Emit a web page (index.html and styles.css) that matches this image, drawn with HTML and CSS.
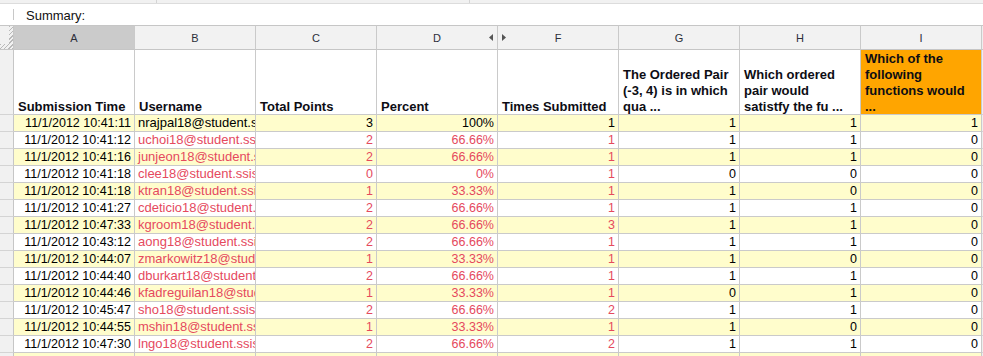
FILE: index.html
```html
<!DOCTYPE html>
<html>
<head>
<meta charset="utf-8">
<link rel="stylesheet" href="styles.css">
</head>
<body>
<div class="topstrip"><div class="seg s1"></div><div class="seg s2"></div><div class="seg s3"></div></div>
<div class="summary"><span class="bar"></span><span class="summary-text">Summary:</span></div>
<div class="sheet">
  <div class="row letters">
    <div class="rn corner"></div>
    <div class="c lt sel">A</div>
    <div class="c lt">B</div>
    <div class="c lt">C</div>
    <div class="c lt">D<svg class="arr arr-l" width="4" height="7" viewBox="0 0 4 7"><path d="M4 0 L0 3.5 L4 7 Z" fill="#555"/></svg></div>
    <div class="c lt">F<svg class="arr arr-r" width="4" height="7" viewBox="0 0 4 7"><path d="M0 0 L4 3.5 L0 7 Z" fill="#555"/></svg></div>
    <div class="c lt">G</div>
    <div class="c lt">H</div>
    <div class="c lt">I</div>
    <div class="fill"></div>
  </div>
  <div class="row head">
    <div class="rn"></div>
    <div class="c h"><span class="ht">Submission Time</span></div>
    <div class="c h"><span class="ht">Username</span></div>
    <div class="c h"><span class="ht">Total Points</span></div>
    <div class="c h"><span class="ht">Percent</span></div>
    <div class="c h"><span class="ht">Times Submitted</span></div>
    <div class="c h"><span class="ht">The Ordered Pair<br>(-3, 4) is in which<br>qua ...</span></div>
    <div class="c h"><span class="ht">Which ordered<br>pair would<br>satistfy the fu ...</span></div>
    <div class="c h orange"><span class="ht">Which of the<br>following<br>functions would<br>...</span></div>
    <div class="fill"></div>
  </div>

  <div class="row y">
    <div class="rn"></div><div class="c r">11/1/2012 10:41:11</div><div class="c l">nrajpal18@student.ssis.edu.vn</div><div class="c r">3</div><div class="c r">100%</div><div class="c r">1</div><div class="c r">1</div><div class="c r">1</div><div class="c r">1</div><div class="fill"></div>
  </div>
  <div class="row">
    <div class="rn"></div><div class="c r">11/1/2012 10:41:12</div><div class="c l red">uchoi18@student.ssis.edu.vn</div><div class="c r red">2</div><div class="c r red">66.66%</div><div class="c r red">1</div><div class="c r">1</div><div class="c r">1</div><div class="c r">0</div><div class="fill"></div>
  </div>
  <div class="row y">
    <div class="rn"></div><div class="c r">11/1/2012 10:41:16</div><div class="c l red">junjeon18@student.ssis.edu.vn</div><div class="c r red">2</div><div class="c r red">66.66%</div><div class="c r red">1</div><div class="c r">1</div><div class="c r">1</div><div class="c r">0</div><div class="fill"></div>
  </div>
  <div class="row">
    <div class="rn"></div><div class="c r">11/1/2012 10:41:18</div><div class="c l red">clee18@student.ssis.edu.vn</div><div class="c r red">0</div><div class="c r red">0%</div><div class="c r red">1</div><div class="c r">0</div><div class="c r">0</div><div class="c r">0</div><div class="fill"></div>
  </div>
  <div class="row y">
    <div class="rn"></div><div class="c r">11/1/2012 10:41:18</div><div class="c l red">ktran18@student.ssis.edu.vn</div><div class="c r red">1</div><div class="c r red">33.33%</div><div class="c r red">1</div><div class="c r">1</div><div class="c r">0</div><div class="c r">0</div><div class="fill"></div>
  </div>
  <div class="row">
    <div class="rn"></div><div class="c r">11/1/2012 10:41:27</div><div class="c l red">cdeticio18@student.ssis.edu.vn</div><div class="c r red">2</div><div class="c r red">66.66%</div><div class="c r red">1</div><div class="c r">1</div><div class="c r">1</div><div class="c r">0</div><div class="fill"></div>
  </div>
  <div class="row y">
    <div class="rn"></div><div class="c r">11/1/2012 10:47:33</div><div class="c l red">kgroom18@student.ssis.edu.vn</div><div class="c r red">2</div><div class="c r red">66.66%</div><div class="c r red">3</div><div class="c r">1</div><div class="c r">1</div><div class="c r">0</div><div class="fill"></div>
  </div>
  <div class="row">
    <div class="rn"></div><div class="c r">11/1/2012 10:43:12</div><div class="c l red">aong18@student.ssis.edu.vn</div><div class="c r red">2</div><div class="c r red">66.66%</div><div class="c r red">1</div><div class="c r">1</div><div class="c r">1</div><div class="c r">0</div><div class="fill"></div>
  </div>
  <div class="row y">
    <div class="rn"></div><div class="c r">11/1/2012 10:44:07</div><div class="c l red">zmarkowitz18@student.ssis.edu.vn</div><div class="c r red">1</div><div class="c r red">33.33%</div><div class="c r red">1</div><div class="c r">1</div><div class="c r">0</div><div class="c r">0</div><div class="fill"></div>
  </div>
  <div class="row">
    <div class="rn"></div><div class="c r">11/1/2012 10:44:40</div><div class="c l red">dburkart18@student.ssis.edu.vn</div><div class="c r red">2</div><div class="c r red">66.66%</div><div class="c r red">1</div><div class="c r">1</div><div class="c r">1</div><div class="c r">0</div><div class="fill"></div>
  </div>
  <div class="row y">
    <div class="rn"></div><div class="c r">11/1/2012 10:44:46</div><div class="c l red">kfadreguilan18@student.ssis.edu.vn</div><div class="c r red">1</div><div class="c r red">33.33%</div><div class="c r red">1</div><div class="c r">0</div><div class="c r">1</div><div class="c r">0</div><div class="fill"></div>
  </div>
  <div class="row">
    <div class="rn"></div><div class="c r">11/1/2012 10:45:47</div><div class="c l red">sho18@student.ssis.edu.vn</div><div class="c r red">2</div><div class="c r red">66.66%</div><div class="c r red">2</div><div class="c r">1</div><div class="c r">1</div><div class="c r">0</div><div class="fill"></div>
  </div>
  <div class="row y">
    <div class="rn"></div><div class="c r">11/1/2012 10:44:55</div><div class="c l red">mshin18@student.ssis.edu.vn</div><div class="c r red">1</div><div class="c r red">33.33%</div><div class="c r red">1</div><div class="c r">1</div><div class="c r">0</div><div class="c r">0</div><div class="fill"></div>
  </div>
  <div class="row">
    <div class="rn"></div><div class="c r">11/1/2012 10:47:30</div><div class="c l red">lngo18@student.ssis.edu.vn</div><div class="c r red">2</div><div class="c r red">66.66%</div><div class="c r red">2</div><div class="c r">1</div><div class="c r">1</div><div class="c r">0</div><div class="fill"></div>
  </div>
  <div class="row y">
    <div class="rn"></div><div class="c r"></div><div class="c l"></div><div class="c r"></div><div class="c r"></div><div class="c r"></div><div class="c r"></div><div class="c r"></div><div class="c r"></div><div class="fill"></div>
  </div>
</div>
</body>
</html>
```

FILE: styles.css
```css
* { box-sizing: border-box; }
html, body { margin: 0; padding: 0; background: #ffffff; }
body {
  font-family: "Liberation Sans", Arial, sans-serif;
  color: #000;
  width: 983px;
  height: 356px;
  overflow: hidden;
}

.topstrip {
  display: flex;
  height: 4px;
  background: #f1f1f1;
  border-bottom: 1px solid #dcdcdc;
}
.topstrip .seg { height: 100%; border-right: 1px solid #d4d4d4; }
.topstrip .s1 { width: 157px; }
.topstrip .s2 { width: 313px; }
.topstrip .s3 { flex: 1; border-right: none; }

.summary {
  height: 21px;
  display: flex;
  align-items: center;
  padding-left: 13px;
}
.summary .bar {
  width: 1px;
  height: 11px;
  background: #c8c8c8;
  margin-right: 12px;
}
.summary-text {
  font-size: 13px;
  line-height: 16px;
  color: #111;
  position: relative;
  top: 1px;
}

.sheet { display: flex; flex-direction: column; }

.row {
  display: grid;
  grid-template-columns: 14px repeat(8, 121px) 1fr;
  height: 17px;
}

.rn {
  background: #f1f1f1;
  border-right: 1px solid #c6c6c6;
  border-bottom: 1px solid #d4d4d4;
}
.fill {
  background: #eeeeee;
  border-bottom: 1px solid #d4d4d4;
}

.c {
  border-right: 1px solid #cacaca;
  border-bottom: 1px solid #cacaca;
  font-size: 12.5px;
  line-height: 16px;
  white-space: nowrap;
  overflow: hidden;
}
.c.r { text-align: right; padding-right: 3px; }
.c.l { text-align: left; padding-left: 3px; font-size: 13px; }
.c.red { color: #e5495e; }
.row.y .c { background: #fffdcc; }

/* column letters row */
.row.letters {
  height: 25px;
}
.row.letters > div {
  border-top: 1px solid #c6c6c6;
  border-bottom: 1px solid #c6c6c6;
}
.c.lt {
  background: #f2f2f2;
  font-size: 11px;
  color: #2c2f3a;
  display: flex;
  align-items: center;
  justify-content: center;
  position: relative;
  overflow: visible;
}
.c.lt.sel { background: #cbcbcb; }
.corner {
  background-color: #f1f1f1;
  background-image:
    repeating-linear-gradient(135deg, #b9b9b9 0 1px, transparent 1px 3px),
    repeating-linear-gradient(135deg, #b9b9b9 0 1px, transparent 1px 3px);
  background-size: 4px 100%, 100% 5px;
  background-position: right top, left bottom;
  background-repeat: no-repeat;
}
.arr { position: absolute; top: 8px; }
.arr-l { right: 4px; }
.arr-r { left: 4px; }

/* header row */
.row.head { height: 65px; }
.c.h {
  background: #ffffff;
  display: flex;
  align-items: flex-end;
  padding-left: 4px;
  font-size: 13px;
  font-weight: bold;
  line-height: 16px;
  color: #0d0d14;
  overflow: visible;
}
.c.h .ht { margin-bottom: -1px; white-space: nowrap; }
.c.h.orange { background: #ffa500; }
```
